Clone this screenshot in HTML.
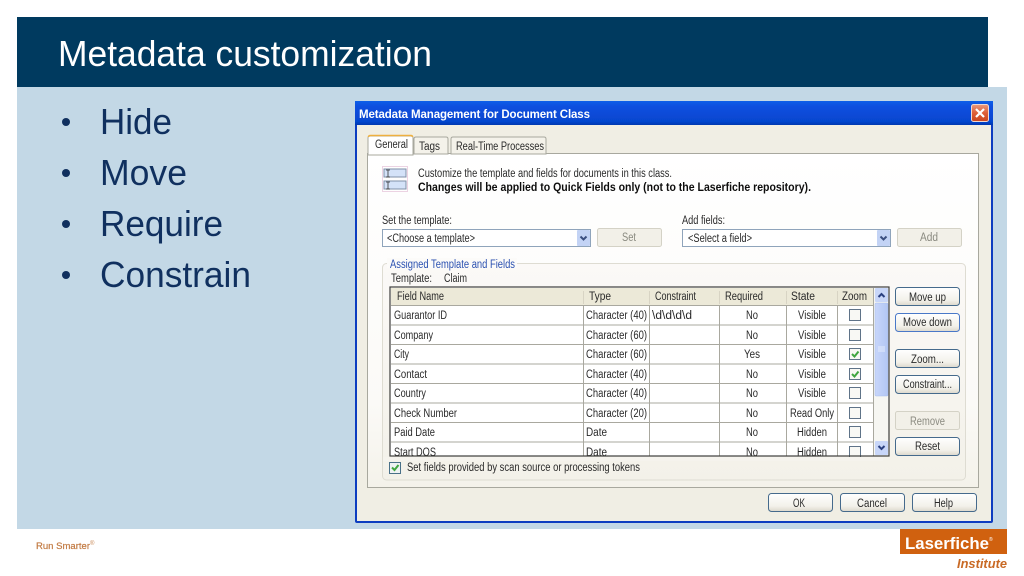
<!DOCTYPE html>
<html>
<head>
<meta charset="utf-8">
<title>Metadata customization</title>
<style>
html,body{margin:0;padding:0;background:#fff;width:1024px;height:576px;overflow:hidden}
svg{display:block}
text{font-family:"Liberation Sans",sans-serif}
.u text,text.u{font-size:11.5px;fill:#2a2a2a}
.c text{text-anchor:middle}
</style>
</head>
<body>
<svg width="1024" height="576" viewBox="0 0 1024 576" xmlns="http://www.w3.org/2000/svg">
<defs>
<linearGradient id="tb" x1="0" y1="0" x2="0" y2="1"><stop offset="0" stop-color="#0a5fe8"/><stop offset=".2" stop-color="#0a50e0"/><stop offset=".85" stop-color="#0646cf"/><stop offset="1" stop-color="#0238b0"/></linearGradient>
<linearGradient id="btn" x1="0" y1="0" x2="0" y2="1"><stop offset="0" stop-color="#ffffff"/><stop offset=".7" stop-color="#f3f1ea"/><stop offset="1" stop-color="#dcd8cc"/></linearGradient>
<linearGradient id="panel" x1="0" y1="0" x2="0" y2="1"><stop offset="0" stop-color="#ffffff"/><stop offset=".75" stop-color="#fbfaf7"/><stop offset="1" stop-color="#f4f2ea"/></linearGradient>
<linearGradient id="grp" x1="0" y1="0" x2="0" y2="1"><stop offset="0" stop-color="#fbf9f7"/><stop offset=".5" stop-color="#f7f5f0"/><stop offset="1" stop-color="#f3f1e9"/></linearGradient>
<linearGradient id="scr" x1="0" y1="0" x2="1" y2="0"><stop offset="0" stop-color="#c8d6fa"/><stop offset="1" stop-color="#b2c6f4"/></linearGradient>
<linearGradient id="close" x1="0" y1="0" x2="0" y2="1"><stop offset="0" stop-color="#eb9a7e"/><stop offset=".5" stop-color="#dd5f38"/><stop offset="1" stop-color="#c9451f"/></linearGradient>
<filter id="soft" x="0" y="0" width="100%" height="100%"><feGaussianBlur stdDeviation="0.35"/></filter>
</defs>

<!-- slide -->
<rect x="17" y="87" width="990" height="442" fill="#c3d8e6"/>
<rect x="17" y="17" width="971" height="70" fill="#003a5f"/>
<text x="58" y="66" font-size="36" fill="#fff" textLength="374" lengthAdjust="spacingAndGlyphs">Metadata customization</text>
<g font-size="36" fill="#10305f">
<circle cx="66" cy="122" r="4"/><text x="100" y="134" textLength="72" lengthAdjust="spacingAndGlyphs">Hide</text>
<circle cx="66" cy="173" r="4"/><text x="100" y="185" textLength="87" lengthAdjust="spacingAndGlyphs">Move</text>
<circle cx="66" cy="224" r="4"/><text x="100" y="236" textLength="123" lengthAdjust="spacingAndGlyphs">Require</text>
<circle cx="66" cy="275" r="4"/><text x="100" y="287" textLength="151" lengthAdjust="spacingAndGlyphs">Constrain</text>
</g>

<!-- dialog -->
<g filter="url(#soft)">
<rect x="355" y="101" width="638" height="422" rx="2" fill="#0a3cc0"/>
<rect x="355" y="101" width="638" height="24" fill="url(#tb)"/>
<rect x="357" y="125" width="634" height="396" fill="#f0eee4"/>
<text x="359" y="118" font-size="11.500" font-weight="bold" fill="#fff" textLength="231" lengthAdjust="spacing">Metadata Management for Document Class</text>
<rect x="971.500" y="104.500" width="17" height="17" rx="2" fill="url(#close)" stroke="#f0d8d0"/>
<path d="M976 109l8 8M984 109l-8 8" stroke="#fff" stroke-width="2.200"/>

<!-- tab panel -->
<rect x="367.500" y="153.500" width="611" height="334" fill="url(#panel)" stroke="#a8a89e"/>
<path d="M414 154V139q0-2 2-2H446q2 0 2 2V154z" fill="#f4f2ea" stroke="#a8a89e"/>
<path d="M451 154V139q0-2 2-2H544q2 0 2 2V154z" fill="#f4f2ea" stroke="#a8a89e"/>
<path d="M368 155V138q0-2 2-2H411q2 0 2 2V155z" fill="#fff" stroke="#a8a89e"/>
<path d="M368.500 137q0-1.500 2-1.500H411q1.500 0 1.500 1.500" fill="none" stroke="#eeb040" stroke-width="1.500"/>
<g class="u">
<text x="375" y="148" textLength="33" lengthAdjust="spacingAndGlyphs">General</text>
<text x="419" y="150" textLength="21" lengthAdjust="spacingAndGlyphs">Tags</text>
<text x="456" y="150" textLength="88" lengthAdjust="spacingAndGlyphs">Real-Time Processes</text>
</g>

<!-- info icon -->
<rect x="382.500" y="166.500" width="25" height="25" fill="none" stroke="#d9a8c8" stroke-dasharray="1 1"/>
<rect x="384" y="169" width="22" height="8" fill="#d4e2f8" stroke="#8090a8"/>
<rect x="384" y="181" width="22" height="8" fill="#d4e2f8" stroke="#8090a8"/>
<path d="M386 170h4M388 170v7M386 177h4M386 182h4M388 182v7M386 189h4" stroke="#333" fill="none" stroke-width=".8"/>

<text class="u" x="418" y="177" textLength="254" lengthAdjust="spacingAndGlyphs">Customize the template and fields for documents in this class.</text>
<text x="418" y="191" font-size="11.500" font-weight="bold" fill="#111" textLength="393" lengthAdjust="spacingAndGlyphs">Changes will be applied to Quick Fields only (not to the Laserfiche repository).</text>

<text class="u" x="382" y="224" textLength="70" lengthAdjust="spacingAndGlyphs">Set the template:</text>
<text class="u" x="682" y="224" textLength="43" lengthAdjust="spacingAndGlyphs">Add fields:</text>

<!-- combos -->
<rect x="382.500" y="229.500" width="208" height="17" fill="#fff" stroke="#8fa4bb"/>
<rect x="577" y="230" width="13" height="16" rx="1" fill="#c3d3f5"/>
<path d="M580.500 236.500l3 3 3-3" fill="none" stroke="#3a4f80" stroke-width="2"/>
<text class="u" x="387" y="242" textLength="88" lengthAdjust="spacingAndGlyphs">&lt;Choose a template&gt;</text>
<rect x="682.500" y="229.500" width="208" height="17" fill="#fff" stroke="#8fa4bb"/>
<rect x="877" y="230" width="13" height="16" rx="1" fill="#c3d3f5"/>
<path d="M880.500 236.500l3 3 3-3" fill="none" stroke="#3a4f80" stroke-width="2"/>
<text class="u" x="688" y="242" textLength="64" lengthAdjust="spacingAndGlyphs">&lt;Select a field&gt;</text>

<!-- disabled buttons -->
<rect x="597.500" y="228.500" width="64" height="18" rx="2" fill="#f2f0e8" stroke="#d4d2c6"/>
<text x="622" y="241" font-size="11.500" fill="#8a8a80" textLength="14" lengthAdjust="spacingAndGlyphs">Set</text>
<rect x="897.500" y="228.500" width="64" height="18" rx="2" fill="#f2f0e8" stroke="#d4d2c6"/>
<text x="920" y="241" font-size="11.500" fill="#8a8a80" textLength="18" lengthAdjust="spacingAndGlyphs">Add</text>

<!-- group -->
<rect x="382.500" y="263.500" width="583" height="216.500" rx="4" fill="url(#grp)" stroke="#dedcd2"/>
<rect x="387" y="258" width="130" height="10" fill="#fcfbf9"/>
<text x="390" y="268" font-size="11.500" fill="#2a50b0" textLength="125" lengthAdjust="spacingAndGlyphs">Assigned Template and Fields</text>
<text class="u" x="391" y="282" textLength="41" lengthAdjust="spacingAndGlyphs">Template:</text>
<text class="u" x="444" y="282" textLength="23" lengthAdjust="spacingAndGlyphs">Claim</text>

<!-- table -->
<rect x="390" y="287" width="499" height="169" fill="#fff"/>
<rect x="391" y="288" width="482" height="18" fill="#ece9d8"/>
<g stroke="#a9a89f" fill="none">
<path d="M391 305.500H874M391 325H874M391 344.500H874M391 364H874M391 383.500H874M391 403H874M391 422.500H874M391 442H874"/>
<path d="M583.500 306V456M649.500 306V456M719.500 306V456M786.500 306V456M837.500 306V456M873.500 288V456"/>
</g>
<path d="M583.500 291V304M649.500 291V304M719.500 291V304M786.500 291V304M837.500 291V304" stroke="#d8d4c4" fill="none"/>
<g class="u">
<text x="397" y="300" textLength="47" lengthAdjust="spacingAndGlyphs">Field Name</text>
<text x="589" y="300" textLength="22" lengthAdjust="spacingAndGlyphs">Type</text>
<text x="655" y="300" textLength="41" lengthAdjust="spacingAndGlyphs">Constraint</text>
<text x="725" y="300" textLength="38" lengthAdjust="spacingAndGlyphs">Required</text>
<text x="791" y="300" textLength="24" lengthAdjust="spacingAndGlyphs">State</text>
<text x="842" y="300" textLength="25" lengthAdjust="spacingAndGlyphs">Zoom</text>

<text x="394" y="319" textLength="53" lengthAdjust="spacingAndGlyphs">Guarantor ID</text>
<text x="394" y="339" textLength="39" lengthAdjust="spacingAndGlyphs">Company</text>
<text x="394" y="358" textLength="15" lengthAdjust="spacingAndGlyphs">City</text>
<text x="394" y="378" textLength="33" lengthAdjust="spacingAndGlyphs">Contact</text>
<text x="394" y="397" textLength="32" lengthAdjust="spacingAndGlyphs">Country</text>
<text x="394" y="417" textLength="63" lengthAdjust="spacingAndGlyphs">Check Number</text>
<text x="394" y="436" textLength="41" lengthAdjust="spacingAndGlyphs">Paid Date</text>
<text x="394" y="456" textLength="42" lengthAdjust="spacingAndGlyphs">Start DOS</text>

<text x="586" y="319" textLength="61" lengthAdjust="spacingAndGlyphs">Character (40)</text>
<text x="586" y="339" textLength="61" lengthAdjust="spacingAndGlyphs">Character (60)</text>
<text x="586" y="358" textLength="61" lengthAdjust="spacingAndGlyphs">Character (60)</text>
<text x="586" y="378" textLength="61" lengthAdjust="spacingAndGlyphs">Character (40)</text>
<text x="586" y="397" textLength="61" lengthAdjust="spacingAndGlyphs">Character (40)</text>
<text x="586" y="417" textLength="61" lengthAdjust="spacingAndGlyphs">Character (20)</text>
<text x="586" y="436" textLength="21" lengthAdjust="spacingAndGlyphs">Date</text>
<text x="586" y="456" textLength="21" lengthAdjust="spacingAndGlyphs">Date</text>
<text x="652" y="319" textLength="40" lengthAdjust="spacingAndGlyphs">\d\d\d\d</text>

<text x="746" y="319" textLength="12" lengthAdjust="spacingAndGlyphs">No</text>
<text x="746" y="339" textLength="12" lengthAdjust="spacingAndGlyphs">No</text>
<text x="744" y="358" textLength="16" lengthAdjust="spacingAndGlyphs">Yes</text>
<text x="746" y="378" textLength="12" lengthAdjust="spacingAndGlyphs">No</text>
<text x="746" y="397" textLength="12" lengthAdjust="spacingAndGlyphs">No</text>
<text x="746" y="417" textLength="12" lengthAdjust="spacingAndGlyphs">No</text>
<text x="746" y="436" textLength="12" lengthAdjust="spacingAndGlyphs">No</text>
<text x="746" y="456" textLength="12" lengthAdjust="spacingAndGlyphs">No</text>

<text x="798" y="319" textLength="28" lengthAdjust="spacingAndGlyphs">Visible</text>
<text x="798" y="339" textLength="28" lengthAdjust="spacingAndGlyphs">Visible</text>
<text x="798" y="358" textLength="28" lengthAdjust="spacingAndGlyphs">Visible</text>
<text x="798" y="378" textLength="28" lengthAdjust="spacingAndGlyphs">Visible</text>
<text x="798" y="397" textLength="28" lengthAdjust="spacingAndGlyphs">Visible</text>
<text x="790" y="417" textLength="44" lengthAdjust="spacingAndGlyphs">Read Only</text>
<text x="797" y="436" textLength="30" lengthAdjust="spacingAndGlyphs">Hidden</text>
<text x="797" y="456" textLength="30" lengthAdjust="spacingAndGlyphs">Hidden</text>
</g>
<!-- row checkboxes -->
<g fill="#f8f8f4" stroke="#5f7388">
<rect x="849.500" y="309.500" width="11" height="11"/>
<rect x="849.500" y="329.500" width="11" height="11"/>
<rect x="849.500" y="348.500" width="11" height="11"/>
<rect x="849.500" y="368.500" width="11" height="11"/>
<rect x="849.500" y="387.500" width="11" height="11"/>
<rect x="849.500" y="407.500" width="11" height="11"/>
<rect x="849.500" y="426.500" width="11" height="11"/>
<rect x="849.500" y="446.500" width="11" height="11"/>
</g>
<path d="M852 354l2.500 2.500 4-5M852 374l2.500 2.500 4-5" fill="none" stroke="#3fa63f" stroke-width="2"/>

<!-- scrollbar -->
<rect x="874" y="288" width="15" height="168" fill="#f6f6f2"/>
<rect x="875" y="288" width="13" height="14" rx="1" fill="#c8d6f8"/>
<path d="M878.500 297l3-3 3 3" fill="none" stroke="#2a3f80" stroke-width="2"/>
<rect x="875" y="303" width="13" height="93" rx="1" fill="url(#scr)" stroke="#a8bcec" stroke-width=".5"/>
<path d="M878 347h7M878 349h7M878 351h7" stroke="#e4ecfc"/>
<rect x="875" y="441" width="13" height="14" rx="1" fill="#c8d6f8"/>
<path d="M878.500 446l3 3 3-3" fill="none" stroke="#2a3f80" stroke-width="2"/>
<rect x="383" y="457" width="500" height="4" fill="#f5f3ed"/>
<rect x="390" y="287" width="499" height="169" fill="none" stroke="#3e3e3a" stroke-width="1.200"/>

<!-- bottom checkbox -->
<rect x="389.500" y="462.500" width="11" height="11" fill="#eef2f2" stroke="#4a7088"/>
<path d="M392 467.500l2.500 2.500 4-5" fill="none" stroke="#3fa63f" stroke-width="2"/>
<text class="u" x="407" y="471" textLength="233" lengthAdjust="spacingAndGlyphs">Set fields provided by scan source or processing tokens</text>

<!-- active buttons -->
<g fill="url(#btn)" stroke="#456a8c">
<rect x="895.500" y="287.500" width="64" height="18" rx="3"/>
<rect x="895.500" y="313.500" width="64" height="18" rx="3" stroke="#4a78c8"/>
<rect x="895.500" y="349.500" width="64" height="18" rx="3"/>
<rect x="895.500" y="375.500" width="64" height="18" rx="3"/>
<rect x="895.500" y="437.500" width="64" height="18" rx="3"/>
<rect x="768.500" y="493.500" width="64" height="18" rx="3"/>
<rect x="840.500" y="493.500" width="64" height="18" rx="3"/>
<rect x="912.500" y="493.500" width="64" height="18" rx="3"/>
</g>
<rect x="895.500" y="411.500" width="64" height="18" rx="2" fill="#f2f0e8" stroke="#d4d2c6"/>
<g class="u">
<text x="909" y="301" textLength="37" lengthAdjust="spacingAndGlyphs">Move up</text>
<text x="903" y="326" textLength="49" lengthAdjust="spacingAndGlyphs">Move down</text>
<text x="911" y="363" textLength="33" lengthAdjust="spacingAndGlyphs">Zoom...</text>
<text x="903" y="388" textLength="49" lengthAdjust="spacingAndGlyphs">Constraint...</text>
<text x="915" y="450" textLength="25" lengthAdjust="spacingAndGlyphs">Reset</text>
<text x="793" y="507" textLength="12" lengthAdjust="spacingAndGlyphs">OK</text>
<text x="857" y="507" textLength="30" lengthAdjust="spacingAndGlyphs">Cancel</text>
<text x="934" y="507" textLength="19" lengthAdjust="spacingAndGlyphs">Help</text>
</g>
<text x="910" y="425" font-size="11.500" fill="#8a8a80" textLength="35" lengthAdjust="spacingAndGlyphs">Remove</text>
</g>

<!-- footer -->
<text x="36" y="549" font-size="9.500" fill="#c27a42" stroke="#c27a42" stroke-width=".2" textLength="54" lengthAdjust="spacingAndGlyphs">Run Smarter</text>
<text x="90" y="545" font-size="6" fill="#c98a58">®</text>
<rect x="900" y="529" width="107" height="25" fill="#d0610f"/>
<text x="905" y="549" font-size="17" font-weight="bold" fill="#fff" textLength="84" lengthAdjust="spacingAndGlyphs">Laserfiche</text>
<text x="989" y="541" font-size="5" fill="#fff">®</text>
<text x="957" y="568" font-size="12.500" font-weight="bold" font-style="italic" fill="#c96a25" textLength="50" lengthAdjust="spacingAndGlyphs">Institute</text>
</svg>
</body>
</html>
